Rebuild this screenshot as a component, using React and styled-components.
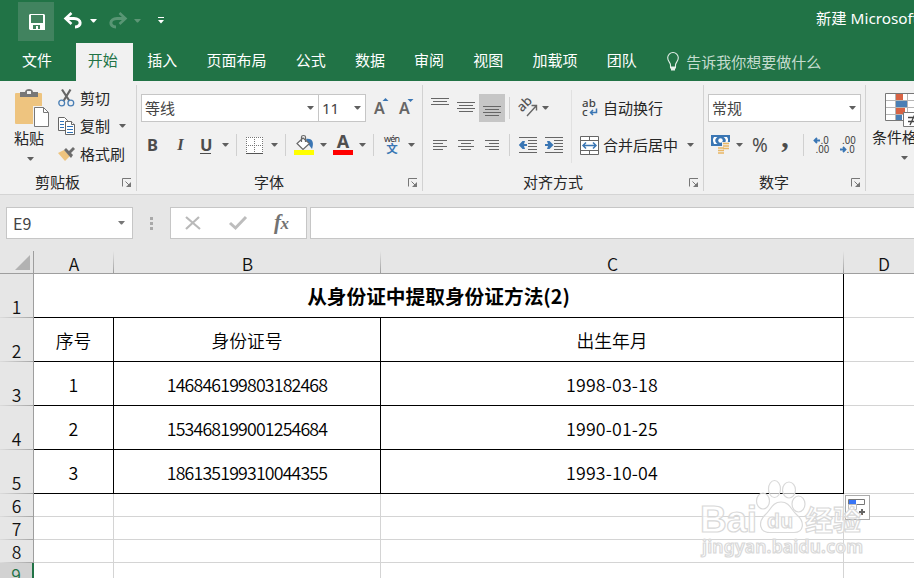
import React from "react";
import styled, { createGlobalStyle } from "styled-components";

const GlobalStyle = createGlobalStyle`
  * {
    box-sizing: border-box;
  }

  body {
    margin: 0;
    overflow: hidden;
    font-family: "Noto Sans", "Noto Sans CJK SC", sans-serif;
    font-size: 15px;
    color: #262626;
  }

  svg {
    display: block;
    flex: none;
    overflow: visible;
  }
`;

const Window = styled.div`
  position: relative;
  width: 914px;
  height: 578px;
  overflow: hidden;
  display: flex;
  flex-direction: column;
  background: #e6e6e6;
`;

/* title bar and tabs */

const TitleBar = styled.header`
  flex: none;
  height: 43px;
  padding-left: 18px;
  display: flex;
  align-items: flex-start;
  background: #217346;
  color: #fff;
`;

const SaveButton = styled.button`
  flex: none;
  width: 36px;
  height: 39px;
  margin-top: 2px;
  padding: 0;
  border: none;
  display: flex;
  align-items: center;
  justify-content: center;
  background: #41835f;
`;

const QuickIcons = styled.div`
  flex: none;
  width: 762px;
  height: 41px;
  display: flex;
  align-items: center;
`;

const DocTitle = styled.div`
  line-height: 20px;
  padding-top: 8px;
  font-size: 15.3px;
  white-space: nowrap;
`;

const Tabs = styled.nav`
  flex: none;
  height: 38px;
  padding-left: 7.5px;
  display: flex;
  background: #217346;
`;

const Tab = styled.div`
  padding: 0 14.6px;
  height: 38px;
  line-height: 34px;
  white-space: nowrap;
  color: ${props => (props.$active ? "#217346" : "#fff")};
  background: ${props => (props.$active ? "#f1f1f1" : "transparent")};
  margin: ${props => (props.$active ? "0 0 0 9px" : "0")};
  width: ${props => (props.$active ? "57px" : "auto")};
  padding-left: ${props => (props.$active ? "12px" : "14.6px")};
`;

const TellMe = styled.div`
  height: 37px;
  padding-left: 16px;
  display: flex;
  align-items: center;
  gap: 7px;
  color: #c5dccf;
  white-space: nowrap;
`;

/* ribbon */

const Ribbon = styled.section`
  flex: none;
  height: 114px;
  padding-top: 4px;
  display: flex;
  background: #f1f1f1;
  border-bottom: 1px solid #d4d4d4;
`;

const Group = styled.div`
  flex: none;
  width: ${props => props.$width}px;
  height: 106px;
  display: flex;
  flex-direction: column;
  border-right: 1px solid #d2d2d2;
`;

const GroupBody = styled.div`
  flex: none;
  height: 85px;
  display: flex;
  flex-direction: ${props => (props.$column ? "column" : "row")};
`;

const GroupFooter = styled.div`
  flex: none;
  height: 21px;
  display: flex;
  align-items: center;
  padding: 2px 4px 0 ${props => props.$left}px;
  justify-content: space-between;
  line-height: 20px;

  svg {
    margin-top: 2px;
  }
`;

const ToolRow = styled.div`
  flex: none;
  height: 28px;
  margin-top: ${props => props.$top || 0}px;
  display: flex;
  align-items: center;
`;

const Tool = styled.span`
  flex: none;
  width: ${props => props.$width}px;
  height: 28px;
  margin-left: ${props => props.$gap || 0}px;
  display: flex;
  align-items: center;
  justify-content: center;
  background: ${props => (props.$pressed ? "#c6c6c6" : "transparent")};
`;

const Glyph = styled.span`
  flex: none;
  width: ${props => props.$width}px;
  margin-left: ${props => props.$gap || 0}px;
  text-align: center;
  font: ${props => props.$italic ? "italic " : ""}bold 16.5px/28px ${props => props.$serif ? '"Liberation Serif"' : '"Noto Sans"'}, sans-serif;
  color: #4c4c4c;
`;

const Underlined = styled(Glyph)`
  line-height: 17px;
  height: 18px;
  border-bottom: 1px solid #4c4c4c;
`;

const Label = styled.span`
  margin-left: ${props => props.$gap || 0}px;
  line-height: 20px;
  white-space: nowrap;
`;

const Rule = styled.span`
  flex: none;
  width: 1px;
  height: 22px;
  margin-left: ${props => props.$gap || 0}px;
  background: #d0d0d0;
`;

const TallRule = styled.span`
  width: 1px;
  height: 73px;
  margin-top: 5px;
  background: #e1e1e1;
`;

const Combo = styled.div`
  flex: none;
  width: ${props => props.$width}px;
  height: 28px;
  margin-left: ${props => props.$gap}px;
  padding: 0 4px 1px 3px;
  line-height: 22px;
  display: flex;
  align-items: center;
  justify-content: space-between;
  background: #fff;
  border: 1px solid #c6c6c6;
  color: #444;
`;

const PasteColumn = styled.div`
  width: 58px;
  padding: 4px 0 0 14px;
`;

const PasteLabel = styled.div`
  line-height: 20px;
  margin: 0 0 9px;
`;

const ArrowBox = styled.div`
  padding-left: ${props => props.$left}px;
`;

const Stack = styled.div`
  width: ${props => props.$width}px;
  margin-top: ${props => props.$top || 0}px;
  display: flex;
  flex-direction: column;
`;

const StylesGroup = styled.div`
  width: 48px;
  overflow: hidden;
  padding: 8px 0 0 6px;
  white-space: nowrap;
`;

const ConditionalWrap = styled.div`
  padding-left: 13px;
`;

/* formula bar */

const FormulaBar = styled.div`
  flex: none;
  height: 56px;
  padding: 12px 0 0 6px;
  display: flex;
`;

const NameBox = styled.div`
  width: 127px;
  height: 32px;
  padding: 0 7px 0 6px;
  display: flex;
  align-items: center;
  justify-content: space-between;
  background: #fff;
  border: 1px solid #c6c6c6;
  font: 16px "Noto Sans CJK SC", sans-serif;
  color: #444;
`;

const Grip = styled.div`
  width: 37px;
  height: 32px;
  display: flex;
  flex-direction: column;
  align-items: center;
  justify-content: center;
  gap: 2px;

  i {
    width: 3px;
    height: 3px;
    background: #a9a9a9;
  }
`;

const FormulaButtons = styled.div`
  width: 137px;
  height: 32px;
  padding-left: 14px;
  display: flex;
  align-items: center;
  background: #fff;
  border: 1px solid #c6c6c6;
`;

const Fx = styled.span`
  margin-left: 27px;
  font: italic bold 21px/24px "Liberation Serif", serif;
  letter-spacing: -0.5px;
  color: #727272;

  small {
    font-size: 17px;
  }
`;

const FormulaInput = styled.div`
  flex: 1;
  height: 32px;
  margin-left: 3px;
  background: #fff;
  border: 1px solid #c6c6c6;
  border-right: none;
`;

/* sheet */

const Sheet = styled.div`
  flex: none;
  display: grid;
  grid-template-columns: 34px 80px 267px 463px 80px;
  grid-template-rows: 23px repeat(5, 44px) repeat(4, 23px);
  background: #fff;
`;

const Corner = styled.div`
  display: flex;
  align-items: flex-end;
  justify-content: flex-end;
  padding: 0 3px 3px 0;
  background: #e6e6e6;
  border-bottom: 1px solid #9e9e9e;
  border-right: 1px solid #9e9e9e;
`;

const ColumnHead = styled.div`
  text-align: center;
  font: 350 17.5px/25px "Noto Sans CJK SC", sans-serif;
  height: 23px;
  color: #111;
  background: linear-gradient(#e6e6e6, #9e9e9e) right / 1px 100% no-repeat #e6e6e6;
  border-bottom: 1px solid #9e9e9e;
`;

const RowHead = styled.div`
  display: flex;
  align-items: flex-end;
  justify-content: center;
  padding-bottom: 1px;
  font: 350 17.5px/20px "Noto Sans CJK SC", sans-serif;
  color: ${props => (props.$current ? "#217346" : "#111")};
  background: linear-gradient(to right, #dcdcdc, #a6a6a6) bottom / 100% 1px no-repeat ${props => (props.$current ? "#d2d2d2" : "#e6e6e6")};
  border-right: ${props => (props.$current ? "2px solid #217346" : "1px solid #9e9e9e")};
`;

const Cell = styled.div`
  grid-column: span ${props => props.$span || 1};
  display: flex;
  align-items: center;
  justify-content: center;
  line-height: 26px;
  border-right: 1px solid ${props => (props.$filled ? "#000" : "#d4d4d4")};
  border-bottom: 1px solid ${props => (props.$filled ? "#000" : "#d4d4d4")};
  font-family: "Noto Sans CJK SC", sans-serif;
  font-size: ${props => (props.$bold ? "19.7px" : "17.8px")};
  font-weight: ${props => (props.$bold ? 700 : 350)};
  letter-spacing: ${props => props.$tracking || 0}px;
  color: #000;
`;

const FillOptions = styled.div`
  position: absolute;
  left: 845px;
  top: 495px;
  width: 25px;
  height: 25px;
  background: #fff;
  border: 1px solid #ababab;
`;

const Watermark = styled.svg`
  position: absolute;
  left: 695px;
  top: 475px;
`;

const Arrow = ({ color = "#5f5f5f" }) => (
  <svg width="7" height="4" viewBox="0 0 7 4">
    <path d="M0 0h7L4 3.500H3z" fill={color} />
  </svg>
);

const Launcher = () => (
  <svg width="10" height="10" viewBox="0 0 10 10" fill="none" stroke="#777">
    <path d="M.5 8.500V.5H9M3.500 3.500l4 4" />
    <path d="M9 4v5H4z" fill="#777" stroke="none" />
  </svg>
);

// each entry is [x, width], rows are 3px apart
const Lines = ({ rows, top = 0 }) => (
  <svg width="18" height="18" viewBox="0 0 18 18" fill="#666">
    {rows.map(([x, w], i) => (
      <rect key={i} x={x} y={top + i * 3} width={w} height="1" />
    ))}
  </svg>
);

const SaveIcon = () => (
  <svg width="16" height="16" viewBox="-1 0 16 16">
    <path d="M1 0h14l1 1v15H1l-1-1V1z" fill="#fff" />
    <path d="M2 1h12v8H2zM4 11h7v4H9v-3H7v3H4z" fill="#41835f" />
  </svg>
);

const UndoIcon = ({ flip }) => (
  <svg width="19" height="16" viewBox="0 0 19 16" opacity={flip ? 0.25 : 1}>
    <g transform={flip ? "translate(19 0) scale(-1 1)" : undefined}>
      <path d="M2 5.500H10c8 0 8 8.500 1 8.500" fill="none" stroke="#fff" strokeWidth="3" />
      <path d="M7.500 0 1.500 5.500 7.500 11" fill="none" stroke="#fff" strokeWidth="2.500" />
    </g>
  </svg>
);

const BulbIcon = () => (
  <svg width="12" height="19" viewBox="0 0 12 19" fill="none" stroke="#e4efe9">
    <path d="M3.500 15v-2C3.500 10.500.7 9.500.7 5.800a5.300 5.300 0 0 1 10.600 0C11.300 9.500 8.500 10.500 8.500 13v2" strokeWidth="1.100" />
    <path d="M3 15.500h6M4 17.500h4" strokeWidth="1.800" />
  </svg>
);

const PasteIcon = () => (
  <svg width="36" height="39" viewBox="0 0 36 39">
    <rect x="1" y="4" width="27" height="31" rx="1" fill="#eec47f" />
    <path d="M6 8V3h5c0-4 8-4 8 0h5v5z" fill="#777" />
    <rect x="13" y="2" width="4" height="3" fill="#f1f1f1" />
    <path d="M19 17h12l5 5v17H19z" fill="#f1f1f1" />
    <path d="M20.500 18.500h9l5 5v14h-14z" fill="#fff" stroke="#777" />
    <path d="M29.500 18.500v5h5" fill="none" stroke="#777" />
  </svg>
);

const CutIcon = () => (
  <svg width="17" height="18" viewBox="0 0 17 18" fill="none">
    <path d="M4 .5 11.500 12M12.500.5 5.500 12" stroke="#666" strokeWidth="2.200" />
    <circle cx="3.700" cy="14" r="2.900" stroke="#4a7fb5" strokeWidth="1.300" />
    <circle cx="12.800" cy="14" r="2.900" stroke="#4a7fb5" strokeWidth="1.300" />
  </svg>
);

const CopyIcon = () => (
  <svg width="18" height="18" viewBox="0 0 18 18" fill="#fff" stroke="#666">
    <path d="M.5.5h6l3 3v10h-9z" />
    <path d="M2 4.500h4M2 7.500h4M2 10.500h4" stroke="#2f72b8" />
    <path d="M7.500 4.500h6l3 3v10h-9z" />
    <path d="M13.500 4.500v3h3" />
    <path d="M9 9.500h6M9 12.500h6M9 15.500h6" stroke="#2f72b8" />
  </svg>
);

const BrushIcon = () => (
  <svg width="18" height="16" viewBox="0 0 18 16">
    <path d="M0 7l6-3 6 6-5 5z" fill="#eec47f" />
    <path d="m6 4 2-2 3 3 4-4 2 2-4 4 2 2-2 3z" fill="#6d6d6d" />
  </svg>
);

const GrowIcon = ({ down }) => (
  <svg width="15" height="18" viewBox="0 0 15 18">
    <text x="0" y="15" fontFamily="Noto Sans" fontWeight="600" fontSize="16" fill="#666">A</text>
    <path d={down ? "M8.500 0h6l-3 3z" : "M8.500 2h6l-3-3z"} fill="#3a76b4" />
  </svg>
);

const BorderIcon = () => (
  <svg width="17" height="17" viewBox="0 0 17 17">
    <path d="M0 0h17v17H0z" fill="#fff" />
    <path d="M0 .5h17M0 8.500h17M.5 0v16M8.500 0v16M16.500 0v16" stroke="#777" strokeDasharray="1 1" />
    <path d="M0 16.500h17" stroke="#555" />
  </svg>
);

const BucketIcon = () => (
  <svg width="20" height="21" viewBox="0 0 20 21">
    <path d="M12 4c7-1 8 4 6 10l-3-4z" fill="#3a76b4" />
    <path d="m9 3 6.500 5.500L9 14.500 3 8.500z" fill="#fff" stroke="#666" strokeWidth="1.200" />
    <path d="M7.500 7V2c0-2 4-2 4 0v5" fill="none" stroke="#666" strokeWidth="1.200" />
    <path d="M0 15h20v5H0z" fill="#ff0" />
  </svg>
);

const FontColorIcon = () => (
  <svg width="20" height="21" viewBox="0 0 20 21">
    <text x="10" y="13" textAnchor="middle" fontFamily="Noto Sans" fontWeight="700" fontSize="18" fill="#4f4f4f">A</text>
    <path d="M0 15h20v5H0z" fill="#f00" />
  </svg>
);

const PhoneticIcon = () => (
  <svg width="18" height="21" viewBox="0 0 18 21">
    <text x="9" y="7" textAnchor="middle" fontFamily="Noto Sans" fontSize="9" textLength="16" fill="#333">wén</text>
    <text x="9" y="18" textAnchor="middle" fontFamily="Noto Sans CJK SC" fontWeight="700" fontSize="11.500" fill="#3a76b4">文</text>
  </svg>
);

const OrientationIcon = () => (
  <svg width="20" height="20" viewBox="0 0 20 20">
    <text transform="translate(4 14.500) rotate(-45)" fontFamily="Noto Sans" fontWeight="500" fontSize="13" fill="#555">ab</text>
    <path d="M9 18 18.500 7.500M13.500 7.500h5v5" fill="none" stroke="#666" strokeWidth="1.400" />
  </svg>
);

const WrapIcon = () => (
  <svg width="17" height="20" viewBox="0 0 17 20">
    <text x="0" y="9" fontFamily="Noto Sans" fontWeight="500" fontSize="11.500" textLength="14" fill="#444">ab</text>
    <text x="0" y="17.500" fontFamily="Noto Sans" fontWeight="500" fontSize="11.500" fill="#444">c</text>
    <path d="M14.500 10.500v4H8.500M11 12l-2.500 2.500L11 17" fill="none" stroke="#3a76b4" strokeWidth="1.500" />
  </svg>
);

const MergeIcon = () => (
  <svg width="19" height="19" viewBox="0 0 19 19" fill="#fff" stroke="#666">
    <path d="M.5.5h18v18H.5zM.5 4.500h18M.5 14.500h18M9.500.5v4M9.500 14.500v4" />
    <path d="M3 9.500h13M6 6.500l-3 3 3 3M13 6.500l3 3-3 3" fill="none" stroke="#3a76b4" strokeWidth="1.500" />
  </svg>
);

const IndentIcon = ({ right }) => (
  <svg width="18" height="17" viewBox="0 0 18 17">
    <path d="M0 .5h18M9 3.500h9M9 6.500h9M9 9.500h9M9 12.500h9M0 15.500h18" stroke="#666" />
    <path d={right ? "M0 7h3L2 4h2.500l4 4-4 4H2l1-3H0z" : "M8 7H5l1-3H3.500L-.2 8l3.700 4H6L5 9h3z"} fill="#3a76b4" />
  </svg>
);

const CurrencyIcon = () => (
  <svg width="20" height="20" viewBox="0 0 20 20">
    <path d="M0 0h19v11H0z" fill="#3a76b4" />
    <path d="M3 2h3.500c-3 2-3 5 0 7H3L2 6V4zM16 2h-3.500c3 2 3 5 0 7H16l1-3V4z" fill="#fff" />
    <circle cx="9.500" cy="5.500" r="2.200" fill="#fff" />
    <path d="M11 7h8v9h-4v4H6v-9h5z" fill="#f1f1f1" />
    <path d="M12 8.500h6M12 11h6M12 13.500h6M7 13h6M7 15.500h6M7 18h6" stroke="#e9b765" strokeWidth="1.700" />
  </svg>
);

const DecimalIcon = ({ less }) => (
  <svg width="17" height="18" viewBox="0 0 17 18" fontFamily="Noto Sans CJK SC" fontSize="10" fill="#444">
    <text x={less ? 3 : 7.500} y="8">{less ? ".00" : ".0"}</text>
    <text x={less ? 7.500 : 2.500} y="17">{less ? ".0" : ".00"}</text>
    <path
      d="M7 4.500H1.500M4 2 1.500 4.500 4 7"
      transform={less ? "translate(8 9) scale(-1 1)" : undefined}
      fill="none"
      stroke="#3a76b4"
      strokeWidth="1.800"
    />
  </svg>
);

const ConditionalIcon = () => (
  <svg width="36" height="34" viewBox="0 0 36 34">
    <path d="M.5.5h35v27H.5z" fill="#fff" stroke="#777" />
    <path d="M1 7.500h35M1 14.500h35M1 21.500h35M10.500 1v26M22.500 1v26" stroke="#b5b5b5" />
    <path d="M11 1h7v6h-7zM11 15h9v6h-9z" fill="#d86344" />
    <path d="M11 8h11v6H11zM11 22h6v5h-6z" fill="#4a7fb5" />
    <path d="M18.500 19.500h17v14h-17z" fill="#fff" stroke="#777" />
    <path d="M23 24.500h9M23 28.500h9M30 21l-5 11" stroke="#444" strokeWidth="1.300" />
  </svg>
);

const tabs = ["文件", "开始", "插入", "页面布局", "公式", "数据", "审阅", "视图", "加载项", "团队"];

const people = [
  { no: "1", id: "146846199803182468", birth: "1998-03-18" },
  { no: "2", id: "153468199001254684", birth: "1990-01-25" },
  { no: "3", id: "186135199310044355", birth: "1993-10-04" },
];

const ClipboardGroup = () => (
  <Group $width={137}>
    <GroupBody>
      <PasteColumn>
        <PasteIcon />
        <PasteLabel>粘贴</PasteLabel>
        <ArrowBox $left={13}><Arrow /></ArrowBox>
      </PasteColumn>
      <Stack $width={78} $top={-1}>
        <ToolRow>
          <CutIcon />
          <Label $gap={5}>剪切</Label>
        </ToolRow>
        <ToolRow>
          <CopyIcon />
          <Label $gap={4}>复制</Label>
          <ArrowBox $left={9}><Arrow /></ArrowBox>
        </ToolRow>
        <ToolRow>
          <BrushIcon />
          <Label $gap={4}>格式刷</Label>
        </ToolRow>
      </Stack>
    </GroupBody>
    <GroupFooter $left={35}>剪贴板<Launcher /></GroupFooter>
  </Group>
);

const FontGroup = () => (
  <Group $width={286}>
    <GroupBody $column>
      <ToolRow $top={9}>
        <Combo $width={178} $gap={4}>等线<Arrow /></Combo>
        <Combo $width={48} $gap={-1}>11<Arrow /></Combo>
        <Tool $width={15} $gap={8}><GrowIcon /></Tool>
        <Tool $width={15} $gap={10}><GrowIcon down /></Tool>
      </ToolRow>
      <ToolRow $top={9}>
        <Glyph $width={11} $gap={10}>B</Glyph>
        <Glyph $width={11} $gap={17} $italic $serif>I</Glyph>
        <Underlined $width={11} $gap={14}>U</Underlined>
        <Tool $width={7} $gap={11}><Arrow /></Tool>
        <Rule $gap={7} />
        <Tool $width={17} $gap={9}><BorderIcon /></Tool>
        <Tool $width={7} $gap={8}><Arrow /></Tool>
        <Rule $gap={7} />
        <Tool $width={20} $gap={8}><BucketIcon /></Tool>
        <Tool $width={7} $gap={6}><Arrow /></Tool>
        <Tool $width={20} $gap={6}><FontColorIcon /></Tool>
        <Tool $width={7} $gap={6}><Arrow /></Tool>
        <Rule $gap={7} />
        <Tool $width={18} $gap={9}><PhoneticIcon /></Tool>
        <Tool $width={7} $gap={7}><Arrow /></Tool>
      </ToolRow>
    </GroupBody>
    <GroupFooter $left={117}>字体<Launcher /></GroupFooter>
  </Group>
);

const AlignmentGroup = () => (
  <Group $width={281}>
    <GroupBody>
      <Stack $width={148}>
        <ToolRow $top={9}>
          <Tool $width={18} $gap={8}><Lines rows={[[0, 18], [2, 14], [0, 18]]} top={-1} /></Tool>
          <Tool $width={18} $gap={8}><Lines rows={[[0, 18], [2, 14], [0, 18], [2, 14]]} top={3} /></Tool>
          <Tool $width={26} $gap={4} $pressed><Lines rows={[[0, 18], [2, 14], [0, 18], [2, 14]]} top={7} /></Tool>
          <Rule $gap={4} />
          <Tool $width={20} $gap={8}><OrientationIcon /></Tool>
          <Tool $width={7} $gap={4}><Arrow /></Tool>
        </ToolRow>
        <ToolRow $top={9}>
          <Tool $width={18} $gap={8}><Lines rows={[[2, 14], [2, 10], [2, 14], [2, 10]]} top={4} /></Tool>
          <Tool $width={18} $gap={8}><Lines rows={[[1, 16], [4, 10], [1, 16], [4, 10]]} top={4} /></Tool>
          <Tool $width={18} $gap={8}><Lines rows={[[2, 14], [6, 10], [2, 14], [6, 10]]} top={4} /></Tool>
          <Rule $gap={8} />
          <Tool $width={18} $gap={9}><IndentIcon /></Tool>
          <Tool $width={18} $gap={8}><IndentIcon right /></Tool>
        </ToolRow>
      </Stack>
      <TallRule />
      <Stack $width={130}>
        <ToolRow $top={9}>
          <Tool $width={17} $gap={10}><WrapIcon /></Tool>
          <Label $gap={4}>自动换行</Label>
        </ToolRow>
        <ToolRow $top={9}>
          <Tool $width={19} $gap={8}><MergeIcon /></Tool>
          <Label $gap={4}>合并后居中</Label>
          <Tool $width={7} $gap={9}><Arrow /></Tool>
        </ToolRow>
      </Stack>
    </GroupBody>
    <GroupFooter $left={100}>对齐方式<Launcher /></GroupFooter>
  </Group>
);

const Percent = styled(Glyph)`
  font-size: 19px;
  font-weight: 400;
`;

const Comma = styled(Glyph)`
  font-size: 30px;
  line-height: 8px;
  height: 24px;
`;

const NumberGroup = () => (
  <Group $width={162}>
    <GroupBody $column>
      <ToolRow $top={9}>
        <Combo $width={153} $gap={4}>常规<Arrow /></Combo>
      </ToolRow>
      <ToolRow $top={9}>
        <Tool $width={20} $gap={7}><CurrencyIcon /></Tool>
        <Tool $width={7} $gap={5}><Arrow /></Tool>
        <Percent $width={18} $gap={8}>%</Percent>
        <Comma $width={10} $gap={11} $serif>,</Comma>
        <Rule $gap={13} />
        <Tool $width={17} $gap={9}><DecimalIcon /></Tool>
        <Tool $width={17} $gap={9}><DecimalIcon less /></Tool>
      </ToolRow>
    </GroupBody>
    <GroupFooter $left={55}>数字<Launcher /></GroupFooter>
  </Group>
);

const App = () => (
  <>
    <GlobalStyle />
    <Window>
      <TitleBar>
        <SaveButton><SaveIcon /></SaveButton>
        <QuickIcons>
          <Tool $width={19} $gap={10}><UndoIcon /></Tool>
          <Tool $width={7} $gap={7}><Arrow color="#fff" /></Tool>
          <Tool $width={19} $gap={11}><UndoIcon flip /></Tool>
          <Tool $width={7} $gap={7}><Arrow color="#5d9676" /></Tool>
          <Tool $width={7} $gap={16}>
            <svg width="6" height="7" viewBox="0 0 6 7" fill="#fff">
              <path d="M0 0h6v1H0zM0 3h6L3 6.500z" />
            </svg>
          </Tool>
        </QuickIcons>
        <DocTitle>新建 Microsoft Excel</DocTitle>
      </TitleBar>
      <Tabs>
        {tabs.map(tab => (
          <Tab key={tab} $active={tab === "开始"}>{tab}</Tab>
        ))}
        <TellMe><BulbIcon />告诉我你想要做什么</TellMe>
      </Tabs>

      <Ribbon>
        <ClipboardGroup />
        <FontGroup />
        <AlignmentGroup />
        <NumberGroup />
        <StylesGroup>
          <ConditionalWrap><ConditionalIcon /></ConditionalWrap>
          <PasteLabel>条件格式</PasteLabel>
          <ArrowBox $left={29}><Arrow /></ArrowBox>
        </StylesGroup>
      </Ribbon>

      <FormulaBar>
        <NameBox>E9<Arrow color="#777" /></NameBox>
        <Grip><i /><i /><i /></Grip>
        <FormulaButtons>
          <svg width="16" height="14" viewBox="0 0 16 14" fill="none" stroke="#b9b9b9" strokeWidth="2.200">
            <path d="M1 1l14 12M14 1 1 13" />
          </svg>
          <ArrowBox $left={28}>
            <svg width="18" height="14" viewBox="0 0 18 14" fill="none" stroke="#bdbdbd" strokeWidth="3">
              <path d="M1 7l5.500 5L17 1" />
            </svg>
          </ArrowBox>
          <Fx>f<small>x</small></Fx>
        </FormulaButtons>
        <FormulaInput />
      </FormulaBar>

      <Sheet>
        <Corner>
          <svg width="15" height="15" viewBox="0 0 15 15"><path d="M15 0v15H0z" fill="#b2b2b2" /></svg>
        </Corner>
        {["A", "B", "C", "D"].map(name => <ColumnHead key={name}>{name}</ColumnHead>)}

        <RowHead>1</RowHead>
        <Cell $span={3} $filled $bold>从身份证中提取身份证方法(2)</Cell>
        <Cell />

        <RowHead>2</RowHead>
        <Cell $filled>序号</Cell>
        <Cell $filled>身份证号</Cell>
        <Cell $filled>出生年月</Cell>
        <Cell />

        {people.map((p, i) => (
          <React.Fragment key={p.id}>
            <RowHead>{i + 3}</RowHead>
            <Cell $filled>{p.no}</Cell>
            <Cell $filled $tracking={-0.85}>{p.id}</Cell>
            <Cell $filled $tracking={0.15}>{p.birth}</Cell>
            <Cell />
          </React.Fragment>
        ))}

        {[6, 7, 8, 9].map(n => (
          <React.Fragment key={n}>
            <RowHead $current={n === 9}>{n}</RowHead>
            <Cell /><Cell /><Cell /><Cell />
          </React.Fragment>
        ))}
      </Sheet>

      <FillOptions>
        <svg width="23" height="23" viewBox="0 0 23 23">
          <path d="M2.500 3.500h16v5h-16z" fill="#fff" stroke="#777" />
          <path d="M3 4h7v4H3z" fill="#3875f6" />
          <path d="M2.500 8.500h8v5h-8z" fill="#fff" stroke="#bbb" />
          <path d="M13 16h6M16 13v6" stroke="#666" strokeWidth="2" />
        </svg>
      </FillOptions>

      <Watermark width="180" height="90" viewBox="0 0 180 90" fill="#fff" fillOpacity="0.65" stroke="#d9d9d9" strokeWidth="1.200">
        <ellipse cx="79.500" cy="14" rx="6" ry="8.500" />
        <ellipse cx="94" cy="15" rx="6.500" ry="8" />
        <ellipse cx="68" cy="26" rx="6.500" ry="8" />
        <ellipse cx="103.500" cy="29" rx="6.500" ry="8" />
        <path d="M86 27c9 0 10 8 16 13 8 7 7 17.500-3 17.500H75C64 57.500 63 47 70 40c6-5 7-13 16-13z" />
        <g fontFamily="Liberation Sans" fontWeight="700">
          <text x="5" y="57" fontSize="37" textLength="57">Bai</text>
          <text x="72" y="53" fontSize="21" textLength="26">du</text>
        </g>
        <text x="110" y="56" fontFamily="Noto Sans CJK SC" fontWeight="700" fontSize="28">经验</text>
        <text x="7" y="78" fontFamily="Noto Sans" fontWeight="600" fontSize="17.500" textLength="161">jingyan.baidu.com</text>
      </Watermark>
    </Window>
  </>
);

export default App;
